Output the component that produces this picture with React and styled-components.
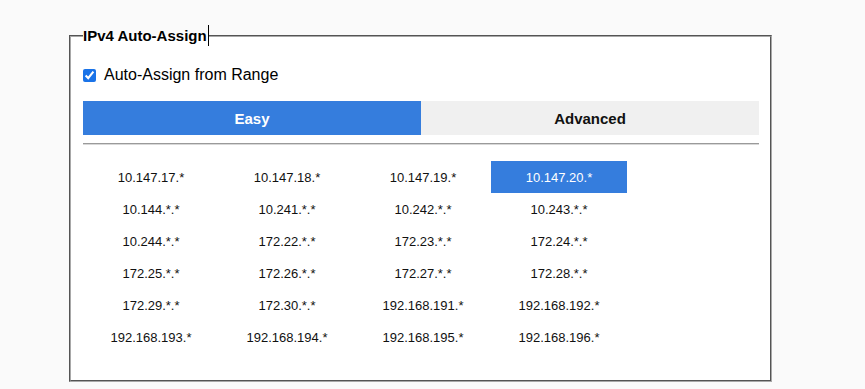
import React, { useState } from "react";
import styled, { createGlobalStyle } from "styled-components";

const GlobalStyle = createGlobalStyle`
  html, body {
    margin: 0;
    padding: 0;
    background: #fafafa;
    font-family: "Liberation Sans", Arial, sans-serif;
    color: #000;
  }
`;

const Page = styled.div`
  padding: 25px 0 0 69px;
  height: 389px;
  box-sizing: border-box;
`;

const Fieldset = styled.fieldset`
  box-sizing: border-box;
  width: 703px;
  margin: 0;
  padding: 0 11px 27px 12px;
  background: #fff;
  border: 2px groove #a8a8a8;
  min-width: 0;
`;

const Legend = styled.legend`
  padding: 0;
  font-size: 15px;
  font-weight: bold;
  line-height: 20px;
  display: flex;
  align-items: center;
`;

const Caret = styled.span`
  display: inline-block;
  width: 1px;
  height: 21px;
  background: #000;
  margin-left: 1px;
`;

const CheckRow = styled.label`
  display: flex;
  align-items: center;
  gap: 8px;
  margin-top: 19px;
  height: 20px;
  font-size: 16px;
  cursor: pointer;

  input {
    width: 13px;
    height: 13px;
    margin: 0;
    accent-color: #1a73e8;
  }
`;

const Tabs = styled.div`
  display: grid;
  grid-template-columns: 1fr 1fr;
  margin-top: 16px;
  height: 34px;
`;

const Tab = styled.button`
  border: 0;
  margin: 0;
  padding: 0;
  font-family: inherit;
  font-size: 15px;
  font-weight: bold;
  cursor: pointer;
  background: ${p => (p.active ? "#357ddd" : "#f0f0f0")};
  color: ${p => (p.active ? "#fff" : "#111")};
`;

const Divider = styled.div`
  margin-top: 8px;
  height: 1px;
  background: #9a9a9a;
  border-bottom: 1px solid #d8d8d8;
`;

const Grid = styled.div`
  display: grid;
  grid-template-columns: repeat(4, 136px);
  grid-auto-rows: 32px;
  margin-top: 16px;
`;

const Cell = styled.div`
  display: flex;
  align-items: center;
  justify-content: center;
  font-size: 13px;
  cursor: pointer;
  background: ${p => (p.selected ? "#357ddd" : "transparent")};
  color: ${p => (p.selected ? "#fff" : "#111")};
`;

const ranges = [
  "10.147.17.*", "10.147.18.*", "10.147.19.*", "10.147.20.*",
  "10.144.*.*", "10.241.*.*", "10.242.*.*", "10.243.*.*",
  "10.244.*.*", "172.22.*.*", "172.23.*.*", "172.24.*.*",
  "172.25.*.*", "172.26.*.*", "172.27.*.*", "172.28.*.*",
  "172.29.*.*", "172.30.*.*", "192.168.191.*", "192.168.192.*",
  "192.168.193.*", "192.168.194.*", "192.168.195.*", "192.168.196.*",
];

export default function App() {
  const [tab, setTab] = useState("easy");
  const [selected, setSelected] = useState("10.147.20.*");
  const [auto, setAuto] = useState(true);

  return (
    <>
      <GlobalStyle />
      <Page>
        <Fieldset>
          <Legend>
            IPv4 Auto-Assign
            <Caret />
          </Legend>
          <CheckRow>
            <input
              type="checkbox"
              checked={auto}
              onChange={e => setAuto(e.target.checked)}
            />
            Auto-Assign from Range
          </CheckRow>
          <Tabs>
            <Tab active={tab === "easy"} onClick={() => setTab("easy")}>
              Easy
            </Tab>
            <Tab active={tab === "advanced"} onClick={() => setTab("advanced")}>
              Advanced
            </Tab>
          </Tabs>
          <Divider />
          <Grid>
            {ranges.map(r => (
              <Cell
                key={r}
                selected={r === selected}
                onClick={() => setSelected(r)}
              >
                {r}
              </Cell>
            ))}
          </Grid>
        </Fieldset>
      </Page>
    </>
  );
}
